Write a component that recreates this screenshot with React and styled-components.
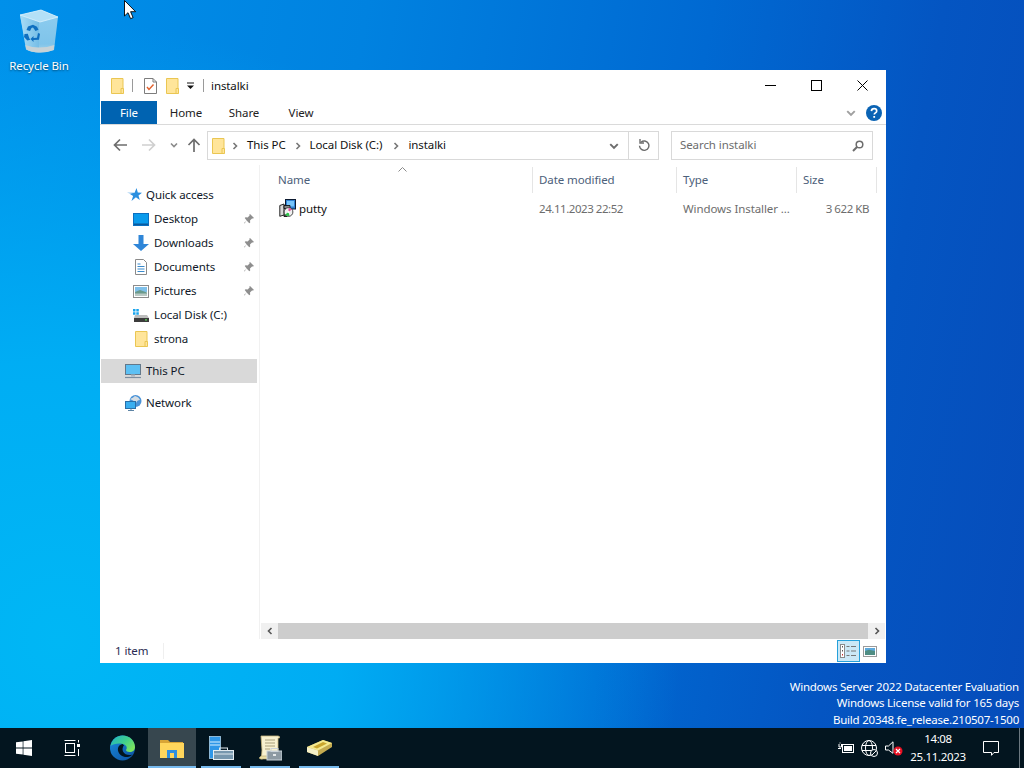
import React from "react";
import styled, { createGlobalStyle } from "styled-components";

const Global = createGlobalStyle`
  html, body { margin: 0; padding: 0; width: 1024px; height: 768px; overflow: hidden; }
  body { font-family: "Noto Sans", "Open Sans", "Liberation Sans", sans-serif; font-size: 11.5px; letter-spacing: -.09px; }
  #root { width: 1024px; height: 768px; }
  * { box-sizing: border-box; }
`;

const Screen = styled.div`
  position: relative; width: 1024px; height: 768px; overflow: hidden;
  display: flex; flex-direction: column;
`;
const Wallpaper = styled.div`
  position: relative; flex: 1; overflow: hidden;
  background:
    radial-gradient(ellipse 620px 620px at 60px 640px, #00b7f5 0%, rgba(0,176,245,.92) 45%, rgba(0,150,235,0) 100%),
    linear-gradient(100deg, #0090ea 0%, #0082e0 32%, #0069d2 62%, #0455c2 82%, #064cba 100%);
`;
const DesktopIcon = styled.div`
  position: absolute; left: 2px; top: 9px; width: 74px;
  display: flex; flex-direction: column; align-items: center; gap: 5px;
  color: #fff; text-shadow: 0 1px 2px rgba(0,0,0,.5);
`;
const Pointer = styled.svg` position: absolute; left: 124px; top: 0; `;
const Watermark = styled.div`
  position: absolute; right: 5px; bottom: 0; text-align: right; color: #fff; line-height: 16.5px;
  letter-spacing: -.22px;
`;

const Win = styled.div`
  position: absolute; left: 100px; top: 70px; width: 786px; height: 593px;
  background: #fff; display: flex; flex-direction: column; color: #000;
`;
const TitleBar = styled.div`
  height: 31px; flex: none; display: flex; align-items: center; padding-left: 11px;
`;
const QuickSep = styled.div`
  width: 1px; height: 13px; background: #9a9a9a; margin: ${p => p.$m};
`;
const QuickIcon = styled.span` display: flex; margin: ${p => p.$m || 0}; `;
const WinTitle = styled.span` margin-left: 7px; color: #111; `;
const WinControls = styled.div` margin-left: auto; margin-right: 1px; display: flex; height: 30px; `;
const WinControl = styled.div`
  width: 46px; display: flex; align-items: center; justify-content: center;
`;
const Ribbon = styled.div`
  height: 24px; flex: none; display: flex; align-items: stretch; padding-left: 1px;
  border-bottom: 1px solid #dadada;
`;
const Tab = styled.div`
  width: ${p => p.$w}px; display: flex; align-items: center; justify-content: center;
  background: ${p => p.$active ? "#0063b1" : "transparent"};
  color: ${p => p.$active ? "#fff" : "#222"};
`;
const RibbonEnd = styled.div`
  margin-left: auto; display: flex; align-items: center; gap: 10px; padding-right: 4px;
`;
const AddressRow = styled.div`
  height: 40px; flex: none; display: flex; align-items: flex-start; padding: 6px 13px 0 13px;
`;
const NavIcons = styled.div`
  width: 94px; height: 28px; display: flex; align-items: center; flex: none;
`;
const NavGap = styled.span` width: ${p => p.$w}px; flex: none; `;
const AddressBox = styled.div`
  width: 452px; height: 29px; border: 1px solid #d9d9d9; display: flex; align-items: center; flex: none;
`;
const Crumbs = styled.div`
  flex: 1; display: flex; align-items: center; padding-left: 4px; color: #111; height: 100%;
`;
const CrumbText = styled.span` margin-bottom: 2px; `;
const CrumbSep = styled.span` display: flex; margin: 0 ${p => p.$r || 8}px 0 ${p => p.$l || 8}px; `;
const AddrBtn = styled.div`
  width: ${p => p.$w}px; height: 100%; display: flex; align-items: center; justify-content: center;
  border-left: ${p => p.$line ? "1px solid #d9d9d9" : "none"};
`;
const SearchBox = styled.div`
  width: 202px; height: 29px; margin-left: 12px; border: 1px solid #d9d9d9; flex: none;
  display: flex; align-items: center; justify-content: space-between; padding: 0 8px; color: #6d6d6d;
`;
const Body = styled.div` flex: 1; display: flex; min-height: 0; `;
const Sidebar = styled.div`
  width: 159px; flex: none; margin-left: 1px; padding-top: 18px; border-right: 1px solid #f1f1f1;
  display: flex; flex-direction: column;
`;
const NavRow = styled.div`
  height: 24px; flex: none; width: 156px; display: flex; align-items: center; position: relative;
  padding: 0 0 2px ${p => p.$top ? 24 : 32}px; margin-top: ${p => p.$gap ? 8 : 0}px;
  background: ${p => p.$sel ? "#d9d9d9" : "transparent"}; color: #101828;
`;
const NavIcon = styled.span`
  width: 21px; flex: none; display: flex; margin-top: 2px;
  padding-left: ${p => p.$pl || 0}px;
`;
const Pin = styled.svg` position: absolute; right: 2px; top: 6px; `;
const Main = styled.div` flex: 1; display: flex; flex-direction: column; min-width: 0; padding-left: 1px; `;
const ListHead = styled.div`
  height: 26px; margin-top: 2px; flex: none; display: grid; grid-template-columns: 272px 144px 120px 80px;
  position: relative; color: #4c607a;
`;
const HeadCell = styled.div`
  padding: 0 0 2px ${p => p.$pl}px; display: flex; align-items: center; border-right: 1px solid #e5e5e5;
`;
const SortMark = styled.svg` position: absolute; left: 137px; top: 0; `;
const FileRow = styled.div`
  height: 24px; margin-top: 4px; flex: none; display: grid; grid-template-columns: 272px 144px 120px 72px;
  align-items: center; color: #6d6d6d;
`;
const FileName = styled.div`
  display: flex; align-items: center; gap: 3px; padding: 0 0 2px 18px; color: #111;
`;
const FileCell = styled.div`
  padding: 0 0 2px ${p => p.$pl || 0}px; text-align: ${p => p.$right ? "right" : "left"}; white-space: nowrap;
  letter-spacing: ${p => p.$tight ? "-.45px" : "inherit"};
`;
const Spacer = styled.div` flex: 1; `;
const Scrollbar = styled.div`
  height: 16px; flex: none; display: flex; margin-right: 1px; background: #f0f0f0;
`;
const ScrollBtn = styled.div`
  width: 17px; flex: none; display: flex; align-items: center; justify-content: center;
`;
const ScrollThumb = styled.div` flex: 1; background: #cdcdcd; `;
const Status = styled.div`
  height: 24px; flex: none; display: flex; align-items: center; padding-left: 15px; color: #2a2a52;
`;
const StatusText = styled.span` margin-bottom: 2px; `;
const StatusSep = styled.div` width: 1px; height: 16px; background: #efefef; margin-left: 15px; `;
const ViewBtns = styled.div` margin-left: auto; display: flex; align-items: center; margin-right: 6px; `;
const ViewBtn = styled.div`
  width: ${p => p.$on ? 23 : 20}px; height: 22px; display: flex; align-items: center; justify-content: center;
  border: 1px solid ${p => p.$on ? "#26a0da" : "transparent"};
  background: ${p => p.$on ? "#cbe8f6" : "transparent"};
`;

const Taskbar = styled.div`
  height: 40px; flex: none; background: #03151f; display: flex; align-items: stretch; color: #fff;
`;
const TaskBtn = styled.div`
  width: ${p => p.$w || 48}px; flex: none; position: relative; display: flex; align-items: center; justify-content: center;
  background: ${p => p.$active ? "#37474f" : "transparent"};
  margin-left: ${p => p.$ml || 0}px;
  ${p => p.$run && `&::after { content: ""; position: absolute; left: ${p.$active ? 0 : 4}px; right: ${p.$active ? 0 : 4}px; bottom: 0; height: 2px; background: #76b9ed; }`}
`;
const Tray = styled.div` margin-left: auto; display: flex; align-items: center; `;
const TrayIcon = styled.span` display: flex; margin-left: ${p => p.$ml || 0}px; `;
const Clock = styled.div`
  width: 66px; margin-left: 2px; text-align: center; line-height: 18px; letter-spacing: -.35px;
`;
const Notify = styled.div` width: 40px; margin-right: 8px; display: flex; justify-content: center; `;
const ShowDesktop = styled.div` width: 5px; height: 100%; border-left: 1px solid #6c7880; `;

const Folder = ({ w = 13, h = 16 }) => (
  <svg width={w} height={h} viewBox="0 0 13 16">
    <path d="M.5.5h11.5v15H.5z" fill="#ffe59a" stroke="#eac652" />
    <path d="M10 10.5h2.500v5H10z" fill="#ffe59a" stroke="#eac652" />
  </svg>
);
const Chev = ({ c = "#777", dir = "right", s = 8 }) => (
  <svg width={s} height={s} viewBox="0 0 8 8">
    <path d={dir === "right" ? "M2.500 1l3 3-3 3" : dir === "left" ? "M5.500 1l-3 3 3 3" : "M1 2.500l3 3 3-3"} fill="none" stroke={c} strokeWidth="1.600" />
  </svg>
);
const Arrow = ({ c, d }) => (
  <svg width="14" height="14" viewBox="0 0 14 14"><path d={d} fill="none" stroke={c} strokeWidth="1.700" /></svg>
);
const PinIcon = () => (
  <Pin width="12" height="12" viewBox="0 0 12 12">
    <path d="M7 1l4 4-1 .6-1-.2-2 2 .2 2-.9.9L3.600 7.600 1.500 10.500 1 10l2.700-2.400-2-2.500.9-.9 2 .2 2-2-.2-1z" fill="#8e8e8e" />
  </Pin>
);

const RecycleBin = () => (
  <svg width="40" height="44" viewBox="0 0 40 44">
    <defs>
      <linearGradient id="rb" x1="0" y1="0" x2="0" y2="1"><stop offset="0" stopColor="#8ecdf0" /><stop offset=".8" stopColor="#7fc4ea" /><stop offset="1" stopColor="#a9d4e8" /></linearGradient>
      <linearGradient id="rbs" x1="0" y1="0" x2="1" y2="0"><stop offset="0" stopColor="#a8dcf6" /><stop offset="1" stopColor="#75bde6" /></linearGradient>
    </defs>
    <path d="M1 6L22 1l17 7-4 33q-7 2.500-14 2.500-8 0-13-3z" fill="url(#rb)" />
    <path d="M1 6l6 34.500q5 3 13 3V13z" fill="url(#rbs)" />
    <path d="M1 6L22 1l17 7-18 5z" fill="#b3e0f7" stroke="#d9f1fc" strokeWidth=".8" />
    <path d="M6.300 36q7 2.500 14 2.500 8 0 15-2.500l-.6 5q-7 2.500-14 2.500-8 0-13.300-3z" fill="#c7d2d6" />
    <path d="M9 17.500l5-1.800 4 2 1.500 3-3 1.300-2.500-3.500-1.500.5L11 22l-3.500-1zM19 24l2 .8-1 6-5.500.3v2l-3-3 3-3v2l3.500-.3zM5.500 25l3.300-.2 1.500 4.500 1 1.500-3 .7-3.300-3.500z" fill="#0f6fc0" />
  </svg>
);
const Cursor = () => (
  <Pointer width="13" height="20" viewBox="0 0 13 20">
    <path d="M.5.5v15.500l3.500-3.300 2.600 6 2.500-1.100-2.500-5.900h5z" fill="#fff" stroke="#000" strokeWidth=".9" />
  </Pointer>
);
const ChecklistDoc = () => (
  <svg width="13" height="16" viewBox="0 0 13 16">
    <path d="M.5.500h8.500l3.500 3.500v11.500H.5z" fill="#fff" stroke="#7d7d7d" />
    <path d="M9 .500V4h3.500" fill="none" stroke="#7d7d7d" />
    <path d="M3 9l2 2.500 4.500-5" fill="none" stroke="#e2602c" strokeWidth="1.400" />
  </svg>
);
const SmallDrop = () => (
  <svg width="9" height="8" viewBox="0 0 9 8"><path d="M1 1h7" stroke="#111" strokeWidth="1" /><path d="M1 3.500h7L4.500 7z" fill="#111" /></svg>
);
const Help = () => (
  <svg width="16" height="16" viewBox="0 0 16 16">
    <circle cx="8" cy="8" r="8" fill="#0a63b4" />
    <path d="M5.400 6.100Q5.600 3.700 8.100 3.700q2.600 0 2.600 2.200 0 1.200-1.300 2-1.100.7-1.100 1.700" fill="none" stroke="#fff" strokeWidth="1.700" />
    <rect x="7.300" y="11" width="1.800" height="1.800" fill="#fff" />
  </svg>
);
const Refresh = () => (
  <svg width="12" height="13" viewBox="0 0 12 13">
    <path d="M3 3.200a4.700 4.700 0 1 1-1.500 3.600" fill="none" stroke="#6d6d6d" strokeWidth="1.400" />
    <path d="M2 0v4h4" fill="none" stroke="#6d6d6d" strokeWidth="1.400" />
  </svg>
);
const Magnifier = () => (
  <svg width="12" height="12" viewBox="0 0 12 12">
    <circle cx="7.500" cy="4.500" r="3.300" fill="none" stroke="#6d6d6d" strokeWidth="1.500" />
    <path d="M5 7L1 11" stroke="#6d6d6d" strokeWidth="2" />
  </svg>
);
const QuickStar = () => (
  <svg width="15" height="14" viewBox="0 0 15 14">
    <path d="M9.500 0l1.300 4.400L15 4.700l-3.500 2.700 1.300 4.600-3.900-2.800L4.500 13l1.600-5.100L3 6h3.200L0 4.700h7.600z" fill="#2a8fe0" />
  </svg>
);
const DesktopI = () => (
  <svg width="16" height="13" viewBox="0 0 16 13"><rect x=".5" y=".5" width="15" height="12" fill="#0a9bec" stroke="#0b6fc0" /><rect x="1" y="10.500" width="14" height="1.500" fill="#0a5a9e" /></svg>
);
const DownloadI = () => (
  <svg width="16" height="16" viewBox="0 0 16 16"><path d="M5.500 0h5v9H16l-8 7-8-7h5.500z" fill="#2f86d8" /></svg>
);
const DocsI = () => (
  <svg width="12" height="16" viewBox="0 0 12 16">
    <path d="M.5.500h8l3 3v12H.5z" fill="#fff" stroke="#8a8a8a" />
    <path d="M2.500 5h3M2.500 7.500h7M2.500 10h7M2.500 12.500h7" stroke="#3a8bcd" strokeWidth="1" />
  </svg>
);
const PicturesI = () => (
  <svg width="16" height="13" viewBox="0 0 16 13">
    <rect x=".5" y=".5" width="15" height="12" fill="#fff" stroke="#8c8c8c" />
    <rect x="2" y="2" width="12" height="5" fill="#7fc0ea" />
    <path d="M2 7l5-2 7 2.500V11H2z" fill="#6a9a8d" />
    <rect x="2" y="8.500" width="12" height="2.500" fill="#b9c9c4" />
  </svg>
);
const DiskI = () => (
  <svg width="16" height="14" viewBox="0 0 16 14">
    <path d="M0 1h2.500v2.500H0zM3.300 1h2.500v2.500H3.300zM0 4.300h2.500v2.500H0zM3.300 4.300h2.500v2.500H3.300z" fill="#19a4ec" />
    <path d="M2 7h12l2 3v4H1v-4z" fill="#bdbdbd" />
    <rect x="1" y="10" width="15" height="4" fill="#3c3c3c" />
    <rect x="12" y="11.300" width="2" height="1.200" fill="#5fe05f" />
  </svg>
);
const PcI = () => (
  <svg width="16" height="15" viewBox="0 0 16 15">
    <rect x=".5" y=".5" width="15" height="10" fill="#5cc0f4" stroke="#63788a" />
    <path d="M6 10.500h4v2H6z" fill="#a9b5bf" />
    <path d="M0 13.500h16" stroke="#7c8ea0" strokeWidth="1.200" />
  </svg>
);
const NetworkI = () => (
  <svg width="17" height="16" viewBox="0 0 17 16">
    <circle cx="10.500" cy="6" r="6" fill="#4a93d8" />
    <path d="M5 4q3-1 5-3 4 1 5 4-3 0-4 3-3-3-6-4z" fill="#d5dde3" />
    <rect x=".5" y="6.500" width="10" height="7" fill="#39aef0" stroke="#2a6fa8" />
    <path d="M3 15.500h6M6 13.500v2" stroke="#5d84a5" />
  </svg>
);
const MsiI = () => (
  <svg width="17" height="18" viewBox="0 0 17 18">
    <rect x="6.500" y=".5" width="10" height="9.500" fill="#2f7fd0" stroke="#0c1a30" />
    <rect x="8" y="2" width="7" height="5.500" fill="#76c4fa" />
    <path d="M.8 6.500l4.200-1.500v11L.8 17.300z" fill="#d8d8d8" stroke="#111" strokeWidth=".9" />
    <path d="M5 6.500h6v3h-6zM5 16h3v1.500H5z" fill="#888" stroke="#111" strokeWidth=".9" />
    <circle cx="9.500" cy="13" r="4.400" fill="#f0f0f0" stroke="#222" strokeWidth=".8" />
    <path d="M9.500 13l-3.300 2.500a4 4 0 0 0 4.300 1.300z" fill="#2ec24a" />
    <path d="M9.500 13l3.300-2.500a4 4 0 0 0-3.300-1.500z" fill="#e84f9b" />
    <circle cx="9.500" cy="13" r="1" fill="#fff" />
  </svg>
);
const DetailsI = () => (
  <svg width="17" height="14" viewBox="0 0 17 14">
    <rect x=".5" y=".5" width="4" height="13" fill="#fff" stroke="#8a8a8a" />
    <path d="M2 2h1v1.500H2zM2 6h1v1.500H2z" fill="#555" /><path d="M2 10h1v1.500H2z" fill="#c33" />
    <path d="M6.500 2.500h3M11 2.500h5M6.500 7h3M11 7h5M6.500 11.500h3M11 11.500h5" stroke="#777" strokeWidth="1.200" />
  </svg>
);
const LargeI = () => (
  <svg width="14" height="11" viewBox="0 0 14 11">
    <rect x=".5" y=".5" width="13" height="10" fill="#fff" stroke="#9a9a9a" />
    <rect x="2" y="2" width="10" height="3" fill="#5da9dc" /><path d="M2 5l4-1.200L12 5v4H2z" fill="#4f8d83" />
  </svg>
);
const StartI = () => (
  <svg width="16" height="16" viewBox="0 0 16 16" fill="#fff">
    <path d="M0 2.300l6.700-.9v6.200H0zM7.400 1.300L16 0v7.600H7.400zM0 8.400h6.700v6.200L0 13.700zM7.400 8.400H16V16l-8.600-1.200z" />
  </svg>
);
const TaskViewI = () => (
  <svg width="16" height="16" viewBox="0 0 16 16" fill="none" stroke="#fff">
    <path d="M.5 .5h11M.5 15.500h11" /><rect x="1.500" y="3.500" width="9" height="9" />
    <rect x="13" y="4" width="3" height="3" fill="#fff" stroke="none" />
    <path d="M14.500 0v2.500M14.500 9v7" />
  </svg>
);
const EdgeI = () => (
  <svg width="25" height="26" viewBox="0 0 25 26">
    <defs>
      <linearGradient id="eg1" x1="0" y1="0" x2="1" y2=".7"><stop offset="0" stopColor="#1fb0c8" /><stop offset=".55" stopColor="#3fcf8e" /><stop offset="1" stopColor="#7ee45c" /></linearGradient>
      <linearGradient id="eg2" x1="0" y1="0" x2="1" y2="1"><stop offset="0" stopColor="#1a8bdc" /><stop offset="1" stopColor="#0b4fa0" /></linearGradient>
    </defs>
    <circle cx="12.500" cy="13" r="12.500" fill="url(#eg2)" />
    <path d="M.5 11C2 4 7 .5 12.500.5 20 .5 25 6 25 12c0 3-2 5-5.500 5-2 0-3.500-.8-3.500-2 1.500-1.500 1-5-3-6C8 8 3 9 .5 11z" fill="url(#eg1)" />
    <path d="M13 9c-3.500.3-5.500 3-5 6.500.6 4 5 7 9.500 6.500 2-.2 3.500-1 5-2.500-3 1.300-8 .5-9.500-3-1-2.500-.2-4.800 1-6.200-.5-.5-1-.8-1-.8z" fill="#03151f" />
  </svg>
);
const ExplorerI = () => (
  <svg width="24" height="19" viewBox="0 0 24 19">
    <path d="M0 1h8l2 2h13v4H0z" fill="#d9a536" />
    <path d="M0 4h24v15H0z" fill="#ffd65c" />
    <path d="M7 11h10v8h-3v-5h-4v5H7z" fill="#2f8fe0" />
  </svg>
);
const ServerI = () => (
  <svg width="25" height="24" viewBox="0 0 25 24">
    <rect x=".5" y=".5" width="11" height="22" fill="#2f97e8" stroke="#bfe3fa" strokeWidth=".7" />
    <path d="M1 6h10M1 9h10" stroke="#d8f0ff" />
    <rect x="4.500" y="14.500" width="20" height="9" fill="#7797ae" stroke="#e6eef3" />
    <path d="M5 18h19" stroke="#dfe8ee" />
    <rect x="10.500" y="12" width="8" height="2.500" fill="none" stroke="#dfe8ee" />
  </svg>
);
const ScrollI = () => (
  <svg width="24" height="26" viewBox="0 0 24 26">
    <path d="M3 1h17q2 0 1.500 2H20v14l-14 6H3q1-4 1-8z" fill="#f8f1cf" stroke="#c9b87e" strokeWidth=".8" />
    <path d="M7 5h10M7 8h10M7 11h10M7 14h5" stroke="#a89f7c" />
    <path d="M1 23q2 2 4 1h8v-3H3z" fill="#ecdfa5" stroke="#b2a26d" strokeWidth=".6" />
    <rect x="9" y="16" width="15" height="9" fill="#8d9aa3" stroke="#c9d2d8" />
    <rect x="13" y="13.500" width="7" height="3" fill="none" stroke="#c9d2d8" />
    <rect x="15" y="19" width="3" height="2" fill="#e4e8ea" />
  </svg>
);
const BookI = () => (
  <svg width="25" height="16" viewBox="0 0 25 16">
    <path d="M0 7l16-7 9 3v4l-14 9L0 12z" fill="#c4ab50" />
    <path d="M0 7l16-7 9 3-14 7.500z" fill="#f4e98f" />
    <path d="M6 7l10-5 4 1.500L10 8.500z" fill="#c9a52e" />
    <path d="M0 7l11 3.500V16L0 12z" fill="#f5f0c6" />
  </svg>
);
const PowerI = () => (
  <svg width="16" height="12" viewBox="0 0 16 12" fill="none" stroke="#fff">
    <rect x="4.500" y="2.500" width="11" height="8" /><rect x="6" y="4" width="8" height="5" fill="#fff" stroke="none" />
    <path d="M0 6.500h3M1 2v3h2.500V2M2 .5v1" />
  </svg>
);
const GlobeI = () => (
  <svg width="17" height="17" viewBox="0 0 17 17" fill="none" stroke="#fff">
    <circle cx="8" cy="8" r="7.500" /><ellipse cx="8" cy="8" rx="3.500" ry="7.500" />
    <path d="M1 5.500h14M1 10.500h14" />
    <circle cx="13" cy="13" r="3.500" fill="#03151f" stroke="#fff" /><path d="M10.800 15.200l4.400-4.400" />
  </svg>
);
const SpeakerI = () => (
  <svg width="18" height="15" viewBox="0 0 18 15">
    <path d="M.5 5h3L8 .800v11.500L3.500 9h-3z" fill="none" stroke="#fff" />
    <circle cx="13" cy="10" r="4.500" fill="#e81123" />
    <path d="M11 8l4 4m0-4l-4 4" stroke="#fff" strokeWidth="1.200" />
  </svg>
);
const NotifyI = () => (
  <svg width="16" height="15" viewBox="0 0 16 15">
    <path d="M.5.5h15v11h-4.500l-2.500 2.800v-2.800H.5z" fill="none" stroke="#fff" />
  </svg>
);

export default function App() {
  return (
    <Screen>
      <Global />
      <Wallpaper>
        <DesktopIcon><RecycleBin /><span>Recycle Bin</span></DesktopIcon>
        <Cursor />
        <Win>
          <TitleBar>
            <QuickIcon><Folder /></QuickIcon>
            <QuickSep $m="0 11px 0 8px" />
            <QuickIcon><ChecklistDoc /></QuickIcon>
            <QuickIcon $m="0 0 0 9px"><Folder /></QuickIcon>
            <QuickIcon $m="0 0 0 7px"><SmallDrop /></QuickIcon>
            <QuickSep $m="0 0 0 8px" />
            <WinTitle>instalki</WinTitle>
            <WinControls>
              <WinControl><svg width="11" height="11" viewBox="0 0 11 11"><path d="M0 5.500h11" stroke="#000" /></svg></WinControl>
              <WinControl><svg width="11" height="11" viewBox="0 0 11 11"><rect x=".5" y=".5" width="10" height="10" fill="none" stroke="#000" /></svg></WinControl>
              <WinControl><svg width="11" height="11" viewBox="0 0 11 11"><path d="M.5.500l10 10m0-10l-10 10" stroke="#000" /></svg></WinControl>
            </WinControls>
          </TitleBar>
          <Ribbon>
            <Tab $w={56} $active>File</Tab>
            <Tab $w={58}>Home</Tab>
            <Tab $w={58}>Share</Tab>
            <Tab $w={56}>View</Tab>
            <RibbonEnd>
              <Chev c="#a0a0a0" dir="down" s={10} />
              <Help />
            </RibbonEnd>
          </Ribbon>
          <AddressRow>
            <NavIcons>
              <Arrow c="#6d6d6d" d="M14 7H1.500M7 1.500L1.500 7 7 12.500" />
              <NavGap $w={15} />
              <Arrow c="#cfcfcf" d="M0 7h12.500M7 1.500L12.500 7 7 12.500" />
              <NavGap $w={14} />
              <Chev c="#8a8a8a" dir="down" />
              <NavGap $w={9} />
              <Arrow c="#6d6d6d" d="M7 14V1.500M1.500 7L7 1.500 12.500 7" />
            </NavIcons>
            <AddressBox>
              <Crumbs>
                <Folder />
                <CrumbSep $l={6} $r={8}><Chev /></CrumbSep>
                <CrumbText>This PC</CrumbText>
                <CrumbSep $l={8} $r={8}><Chev /></CrumbSep>
                <CrumbText>Local Disk (C:)</CrumbText>
                <CrumbSep $l={10} $r={8}><Chev /></CrumbSep>
                <CrumbText>instalki</CrumbText>
              </Crumbs>
              <AddrBtn $w={28}><Chev c="#6d6d6d" dir="down" s={10} /></AddrBtn>
              <AddrBtn $w={30} $line><Refresh /></AddrBtn>
            </AddressBox>
            <SearchBox><CrumbText>Search instalki</CrumbText><Magnifier /></SearchBox>
          </AddressRow>
          <Body>
            <Sidebar>
              <NavRow $top><NavIcon $pl={2}><QuickStar /></NavIcon>Quick access</NavRow>
              <NavRow><NavIcon><DesktopI /></NavIcon>Desktop<PinIcon /></NavRow>
              <NavRow><NavIcon><DownloadI /></NavIcon>Downloads<PinIcon /></NavRow>
              <NavRow><NavIcon $pl={2}><DocsI /></NavIcon>Documents<PinIcon /></NavRow>
              <NavRow><NavIcon><PicturesI /></NavIcon>Pictures<PinIcon /></NavRow>
              <NavRow><NavIcon><DiskI /></NavIcon>Local Disk (C:)</NavRow>
              <NavRow><NavIcon $pl={2}><Folder /></NavIcon>strona</NavRow>
              <NavRow $top $sel $gap><NavIcon><PcI /></NavIcon>This PC</NavRow>
              <NavRow $top $gap><NavIcon><NetworkI /></NavIcon>Network</NavRow>
            </Sidebar>
            <Main>
              <ListHead>
                <SortMark width="9" height="5" viewBox="0 0 9 5"><path d="M.5 4.500l4-4 4 4" fill="none" stroke="#8a8a8a" /></SortMark>
                <HeadCell $pl={17}>Name</HeadCell>
                <HeadCell $pl={6}>Date modified</HeadCell>
                <HeadCell $pl={6}>Type</HeadCell>
                <HeadCell $pl={6}>Size</HeadCell>
              </ListHead>
              <FileRow>
                <FileName><MsiI />putty</FileName>
                <FileCell $pl={6} $tight>24.11.2023 22:52</FileCell>
                <FileCell $pl={6}>Windows Installer ...</FileCell>
                <FileCell $right $tight>3 622 KB</FileCell>
              </FileRow>
              <Spacer />
              <Scrollbar>
                <ScrollBtn><Chev c="#555" dir="left" /></ScrollBtn>
                <ScrollThumb />
                <ScrollBtn><Chev c="#555" /></ScrollBtn>
              </Scrollbar>
            </Main>
          </Body>
          <Status>
            <StatusText>1 item</StatusText><StatusSep />
            <ViewBtns>
              <ViewBtn $on><DetailsI /></ViewBtn>
              <ViewBtn><LargeI /></ViewBtn>
            </ViewBtns>
          </Status>
        </Win>
        <Watermark>
          <div>Windows Server 2022 Datacenter Evaluation</div>
          <div>Windows License valid for 165 days</div>
          <div>Build 20348.fe_release.210507-1500</div>
        </Watermark>
      </Wallpaper>
      <Taskbar>
        <TaskBtn><StartI /></TaskBtn>
        <TaskBtn><TaskViewI /></TaskBtn>
        <TaskBtn $w={52}><EdgeI /></TaskBtn>
        <TaskBtn $active $run><ExplorerI /></TaskBtn>
        <TaskBtn $run $ml={1}><ServerI /></TaskBtn>
        <TaskBtn $run $ml={1}><ScrollI /></TaskBtn>
        <TaskBtn $run $ml={1}><BookI /></TaskBtn>
        <Tray>
          <TrayIcon><PowerI /></TrayIcon>
          <TrayIcon $ml={7}><GlobeI /></TrayIcon>
          <TrayIcon $ml={7}><SpeakerI /></TrayIcon>
          <Clock><div>14:08</div><div>25.11.2023</div></Clock>
          <Notify><NotifyI /></Notify>
          <ShowDesktop />
        </Tray>
      </Taskbar>
    </Screen>
  );
}
